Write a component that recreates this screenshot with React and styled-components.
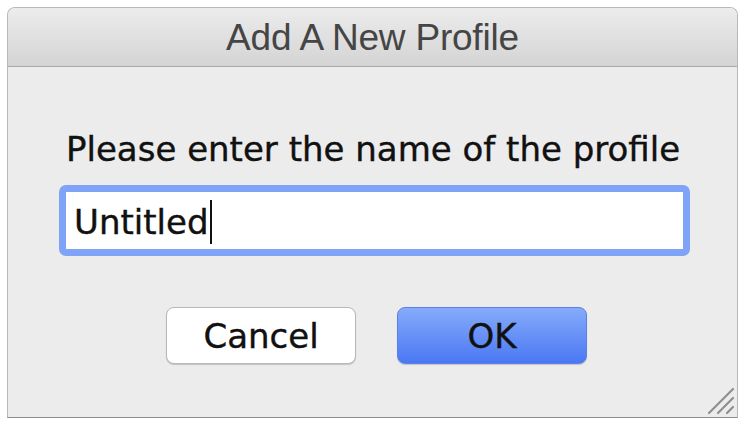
import React from 'react';
import styled, { createGlobalStyle } from 'styled-components';

const Global = createGlobalStyle`
  html, body {
    margin: 0;
    background: #ffffff;
  }
`;

const Window = styled.div`
  position: relative;
  box-sizing: border-box;
  margin: 7px 0 0 7px;
  width: 731px;
  height: 411px;
  background: #ececec;
  border: 1px solid #b8b8b8;
  border-bottom-color: #8c8c8c;
  border-radius: 8px 8px 0 0;
  display: flex;
  flex-direction: column;
  overflow: hidden;
`;

const TitleBar = styled.div`
  height: 59px;
  flex: none;
  display: flex;
  align-items: center;
  justify-content: center;
  padding-top: 2px;
  box-sizing: border-box;
  background: linear-gradient(#ececec, #d4d4d4);
  border-bottom: 1px solid #a9a9a9;
  font-family: "Liberation Sans", Arial, sans-serif;
  font-size: 37px;
  color: #454545;
  letter-spacing: -0.2px;
`;

const Body = styled.div`
  display: flex;
  flex-direction: column;
  padding: 62px 0 0 51px;
  font-family: "DejaVu Sans", Verdana, sans-serif;
  font-size: 34px;
  color: #111;
  -webkit-text-stroke: 0.4px #111;
`;

const Label = styled.div`
  line-height: 40px;
  margin-left: 7px;
`;

const FieldRing = styled.div`
  box-sizing: border-box;
  margin-top: 16px;
  width: 631px;
  height: 71px;
  border: 7px solid #7fa3f6;
  border-radius: 7px;
  background: #ffffff;
  display: flex;
  align-items: center;
  padding-left: 8px;
  padding-top: 2px;
`;

const Caret = styled.span`
  display: inline-block;
  width: 2px;
  height: 44px;
  margin-left: 1px;
  background: #111;
`;

const Buttons = styled.div`
  display: flex;
  gap: 41px;
  margin-top: 51px;
  margin-left: 107px;
`;

const Button = styled.div`
  box-sizing: border-box;
  width: 190px;
  height: 57px;
  display: flex;
  align-items: center;
  justify-content: center;
  border-radius: 8px;
  font-size: 34px;
  color: #111;
  border: 1px solid ${({ primary }) => (primary ? '#5b80e6' : '#b8b8b8')};
  background: ${({ primary }) =>
    primary ? 'linear-gradient(#86abfa, #4a78f3)' : '#ffffff'};
  box-shadow: 0 1px 1px rgba(0, 0, 0, 0.18);
`;

const Grip = styled.svg`
  position: absolute;
  right: 2px;
  bottom: 2px;
`;

export default function App() {
  return (
    <>
      <Global />
      <Window>
        <TitleBar>Add A New Profile</TitleBar>
        <Body>
          <Label>Please enter the name of the profile</Label>
          <FieldRing>
            Untitled<Caret />
          </FieldRing>
          <Buttons>
            <Button>Cancel</Button>
            <Button primary>OK</Button>
          </Buttons>
        </Body>
        <Grip width="30" height="30" viewBox="0 0 30 30">
          <g stroke="#8e8e8e" strokeWidth="2.2" strokeLinecap="round">
            <line x1="4" y1="28" x2="28" y2="4" />
            <line x1="13" y1="28" x2="28" y2="13" />
            <line x1="22" y1="28" x2="28" y2="22" />
          </g>
        </Grip>
      </Window>
    </>
  );
}
